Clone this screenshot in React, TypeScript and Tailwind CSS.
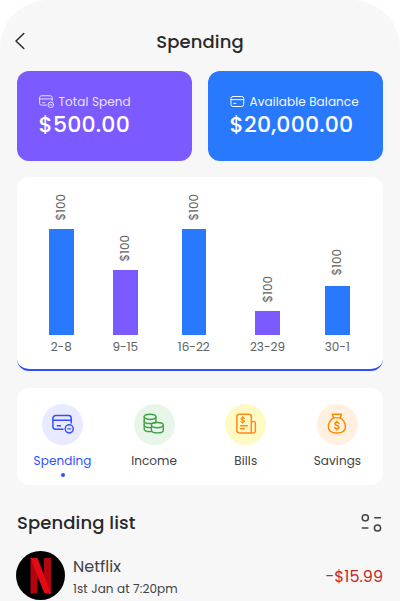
import clsx from "clsx";

const summaries = [
  {
    label: "Total Spend",
    amount: "$500.00",
    card: "bg-[#7b5aff]",
    labelClass: "text-[#e9e3ff]",
    icon: CardMinusIcon,
  },
  {
    label: "Available Balance",
    amount: "$20,000.00",
    card: "bg-[#2979ff]",
    labelClass: "text-[#f4f8ff]",
    icon: CardIcon,
  },
];

const bars = [
  { range: "2-8", value: "$100", height: 106, width: "w-[24.5px]", gap: "mt-[9px]", color: "bg-[#2979ff]" },
  { range: "9-15", value: "$100", height: 65.5, width: "w-[25px]", gap: "mt-2", color: "bg-[#7b5aff]" },
  { range: "16-22", value: "$100", height: 106, width: "w-[33.5px]", gap: "mt-[9px]", color: "bg-[#2979ff]" },
  { range: "23-29", value: "$100", height: 24.5, width: "w-[35.5px]", gap: "mt-2", color: "bg-[#7b5aff]" },
  { range: "30-1", value: "$100", height: 49, width: "w-[25.5px]", gap: "mt-[11px]", color: "bg-[#2979ff]" },
];

const tabs = [
  { name: "Spending", circle: "bg-[#e9eaff]", stroke: "text-[#304ffe]", icon: CardMinusIcon, active: true },
  { name: "Income", circle: "bg-[#e8f5e9]", stroke: "text-[#43a047]", icon: CoinsIcon, active: false },
  { name: "Bills", circle: "bg-[#fff9c4]", stroke: "text-[#fb8c1a]", icon: BillIcon, active: false },
  { name: "Savings", circle: "bg-[#fff0e0]", stroke: "text-[#fb8c00]", icon: MoneyBagIcon, active: false },
];

type IconProps = { className?: string };

function CardMinusIcon({ className }: IconProps) {
  return (
    <svg className={className} viewBox="0 0 24 24" fill="none" stroke="currentColor" strokeWidth="1.6" strokeLinecap="round" strokeLinejoin="round">
      <path d="M12 17.8H4a3 3 0 0 1-3-3V5.800a3 3 0 0 1 3-3h14a3 3 0 0 1 3 3v5" />
      <path d="M1 7.900h20M5.800 14h3.400" />
      <circle cx="18.800" cy="17.300" r="4.400" />
      <path d="M17.400 17.300h2.800" />
    </svg>
  );
}

function CardIcon({ className }: IconProps) {
  return (
    <svg className={className} viewBox="0 0 24 24" fill="none" stroke="currentColor" strokeWidth="1.6" strokeLinecap="round" strokeLinejoin="round">
      <rect x="1.5" y="4" width="20.500" height="16" rx="3.200" />
      <path d="M1.500 9h20.500M6 15h3.500" />
    </svg>
  );
}

function CoinsIcon({ className }: IconProps) {
  return (
    <svg className={className} viewBox="0 0 24 24" fill="none" stroke="currentColor" strokeWidth="1.5" strokeLinecap="round" strokeLinejoin="round">
      <ellipse cx="7.700" cy="4.200" rx="6.400" ry="2.900" />
      <path d="M1.300 4.200v13.200c0 1.700 2.900 2.900 6.400 2.900.5 0 1 0 1.500-.1M14.100 4.200v5.600" />
      <path d="M1.300 8.600c0 1.700 2.900 2.900 6.400 2.900 3 0 5.500-.9 6.200-2.100M1.300 13c0 1.700 2.900 2.900 6.400 2.900.5 0 1 0 1.500-.1" />
      <ellipse cx="15.700" cy="13.200" rx="6.500" ry="2.900" />
      <path d="M9.200 13.200v5.600c0 1.700 2.900 2.900 6.500 2.900s6.500-1.200 6.500-2.900v-5.600" />
    </svg>
  );
}

function BillIcon({ className }: IconProps) {
  return (
    <svg className={className} viewBox="0 0 24 24" fill="none" stroke="currentColor" strokeWidth="1.6" strokeLinecap="round" strokeLinejoin="round">
      <path d="M20 21.700H4.800a2.800 2.800 0 0 1-2.800-2.800V4.100a2.800 2.800 0 0 1 2.800-2.800H15a2.800 2.800 0 0 1 2.800 2.800v17.600M20 21.700a2.200 2.200 0 0 0 2.200-2.200v-8.200a2 2 0 0 0-2-2h-2.400" />
      <path d="M6.200 14h7.200M6.200 17.200h4" />
      <path d="M10.100 5.900c-.3-.7-.9-1-1.700-1-1 0-1.800.5-1.800 1.300 0 1.900 3.600 1 3.600 2.800 0 .9-.8 1.300-1.800 1.300-.9 0-1.600-.3-1.900-1M8.400 3.900v7.300" strokeWidth="1.300" />
    </svg>
  );
}

function MoneyBagIcon({ className }: IconProps) {
  return (
    <svg className={className} viewBox="0 0 24 24" fill="none" stroke="currentColor" strokeWidth="1.6" strokeLinecap="round" strokeLinejoin="round">
      <path d="M7 1.300h9.800l-1.400 4H8.400Z" />
      <path d="M8.400 5.300C5 7.300 2.600 11 2.600 14.900c0 4.600 3.200 6.800 9.300 6.800s9.300-2.200 9.300-6.800c0-3.900-2.400-7.600-5.800-9.600" />
      <path d="M14.100 11.300c-.4-.8-1.200-1.200-2.200-1.200-1.300 0-2.200.6-2.200 1.700 0 2.400 4.500 1.300 4.500 3.700 0 1.100-1 1.700-2.300 1.700-1.200 0-2-.5-2.400-1.300M11.900 8.800v1.300M11.900 17.200v1.300" />
    </svg>
  );
}

function NetflixLogo({ className }: IconProps) {
  return (
    <svg className={className} viewBox="0 0 49 49">
      <circle cx="24.500" cy="24.500" r="24.500" fill="#000" />
      <path d="M14.500 7h7v35q-3.500.1-7 .8ZM28 7h7v35.800q-3.500-.7-7-.8Z" fill="#b1060f" />
      <path d="M14.500 7h7L35 42.800q-3.500-.7-6.800-.8Z" fill="#e50914" />
    </svg>
  );
}

function Chart() {
  return (
    <section className="mt-[16.5px] h-[194px] rounded-xl border-b-2 border-[#304ffe] bg-white pl-8 pr-[33px]">
      <div className="flex h-[178px] items-end justify-between">
        {bars.map((bar) => (
          <div key={bar.range} className={clsx("flex flex-col items-center", bar.width)}>
            <span className="rotate-180 text-[12px] leading-4 text-[#616161] [writing-mode:vertical-rl]">
              {bar.value}
            </span>
            <div className={clsx("w-[24.5px]", bar.gap, bar.color)} style={{ height: bar.height }} />
            <span className="mt-1 whitespace-nowrap text-[12px] leading-4 text-[#616161]">{bar.range}</span>
          </div>
        ))}
      </div>
    </section>
  );
}

export default function App() {
  return (
    <div className="h-[601px] overflow-hidden bg-white font-['Poppins','Inter',sans-serif]">
      <main className="h-full rounded-t-[48px] bg-[#f7f7f7] px-[17px]">
        <header className="grid h-[71px] grid-cols-[20px_1fr_20px] items-center pt-3">
          <svg className="-ml-[3px] -mt-px h-[18px] w-3" viewBox="0 0 12 18" fill="none" stroke="#292929" strokeWidth="1.5" strokeLinecap="round" strokeLinejoin="round">
            <path d="M9.800 1.500 2 9l7.800 7.500" />
          </svg>
          <h1 className="text-center text-[18px] font-medium leading-6 tracking-[0.1px] text-[#292929]">Spending</h1>
        </header>

        <div className="grid grid-cols-2 gap-4">
          {summaries.map((item) => (
            <div key={item.label} className={clsx("h-[89.5px] rounded-xl pl-[21.5px] pt-[21.5px]", item.card)}>
              <p className={clsx("flex items-center gap-[5px] whitespace-nowrap text-[12px] leading-[18px] tracking-[0.1px]", item.labelClass)}>
                <item.icon className="h-[15px] w-[15px] shrink-0" />
                {item.label}
              </p>
              <p className="text-[22px] font-medium leading-7 tracking-[0.2px] text-white">{item.amount}</p>
            </div>
          ))}
        </div>

        <Chart />

        <nav className="mt-[16.5px] flex h-[97.5px] justify-between rounded-xl bg-white px-[15px] pt-4">
          {tabs.map((tab) => (
            <div key={tab.name} className="flex w-[61px] flex-col items-center">
              <div className={clsx("flex h-[41px] w-[41px] items-center justify-center rounded-full", tab.circle, tab.stroke)}>
                <tab.icon className="h-[22px] w-[22px]" />
              </div>
              <span className={clsx("mt-1.5 text-[12px] leading-5 tracking-[0.08px]", tab.active ? "text-[#304ffe]" : "text-[#424242]")}>
                {tab.name}
              </span>
              {tab.active && <span className="mt-0.5 h-1 w-1 rounded-full bg-[#304ffe]" />}
            </div>
          ))}
        </nav>

        <div className="mt-[26px] flex h-6 items-center justify-between">
          <h2 className="text-[18px] font-medium leading-6 tracking-[0.1px] text-[#292929]">Spending list</h2>
          <svg className="mr-px h-5 w-[22px]" viewBox="0 0 22 20" fill="none" stroke="#424242" strokeWidth="1.5" strokeLinecap="round">
            <circle cx="5.300" cy="4.800" r="3.100" />
            <path d="M14.800 4.800h5.600M2.300 15h5.600" />
            <circle cx="17.500" cy="15" r="3.100" />
          </svg>
        </div>

        <div className="mt-4 flex items-center">
          <NetflixLogo className="-ml-px h-[49px] w-[49px] shrink-0" />
          <div className="ml-2 flex-1 pt-0.5">
            <p className="text-[16px] leading-6 text-[#424242]">Netflix</p>
            <p className="text-[12px] leading-5 tracking-[0.12px] text-[#424242]">1st Jan at 7:20pm</p>
          </div>
          <p className="pt-0.5 text-[16px] leading-6 text-[#c62828]">-$15.99</p>
        </div>
      </main>
    </div>
  );
}
